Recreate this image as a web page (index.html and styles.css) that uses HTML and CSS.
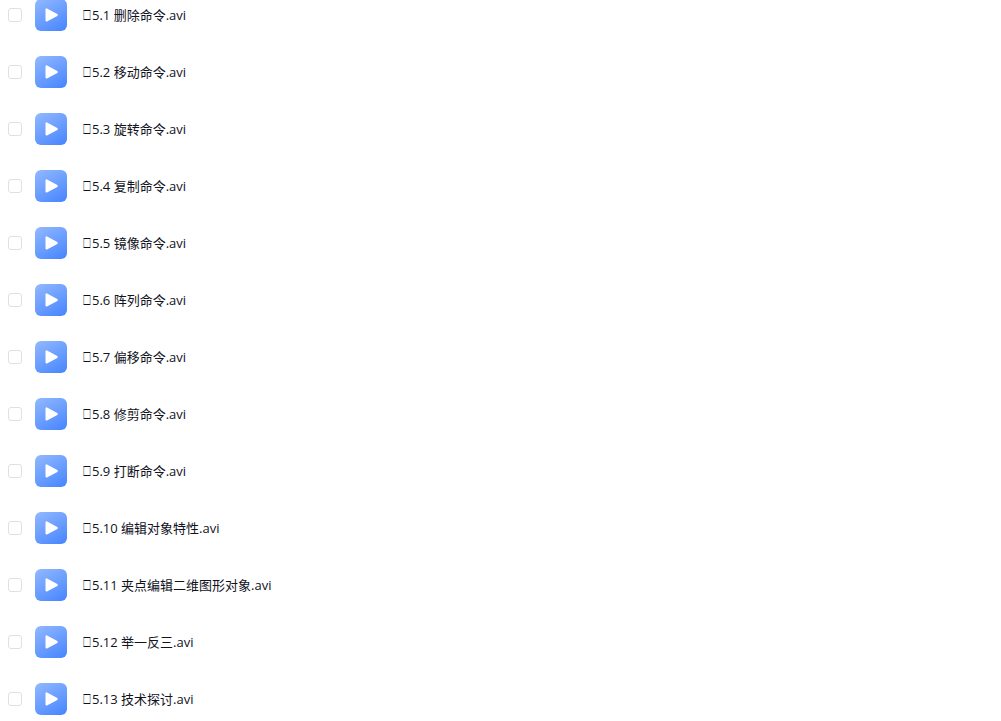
FILE: index.html
```html
<!DOCTYPE html>
<html lang="zh-CN">
<head>
	<meta charset="UTF-8">
	<title>文件列表</title>
	<link rel="stylesheet" href="styles.css">
</head>
<body>
	<!-- 播放图标，列表中重复使用 -->
	<svg class="defs" width="0" height="0" aria-hidden="true">
		<defs>
			<linearGradient id="blue" x1="0.2" y1="0" x2="0.8" y2="1">
				<stop offset="0" stop-color="#8db5ff"/>
				<stop offset="1" stop-color="#4b88ff"/>
			</linearGradient>
			<symbol id="video" viewBox="0 0 32 32">
				<rect width="32" height="32" rx="6" fill="url(#blue)"/>
				<path d="M11.5 10.4v11.2L21.8 16z" fill="#fff" stroke="#fff" stroke-width="2" stroke-linejoin="round"/>
			</symbol>
		</defs>
	</svg>
	<div class="box">
		<ul class="files">
			<li><input type="checkbox" id="f1"><svg class="icon"><use href="#video"/></svg><label for="f1"><span class="mark">⎕</span>5.1 删除命令.avi</label></li>
			<li><input type="checkbox" id="f2"><svg class="icon"><use href="#video"/></svg><label for="f2"><span class="mark">⎕</span>5.2 移动命令.avi</label></li>
			<li><input type="checkbox" id="f3"><svg class="icon"><use href="#video"/></svg><label for="f3"><span class="mark">⎕</span>5.3 旋转命令.avi</label></li>
			<li><input type="checkbox" id="f4"><svg class="icon"><use href="#video"/></svg><label for="f4"><span class="mark">⎕</span>5.4 复制命令.avi</label></li>
			<li><input type="checkbox" id="f5"><svg class="icon"><use href="#video"/></svg><label for="f5"><span class="mark">⎕</span>5.5 镜像命令.avi</label></li>
			<li><input type="checkbox" id="f6"><svg class="icon"><use href="#video"/></svg><label for="f6"><span class="mark">⎕</span>5.6 阵列命令.avi</label></li>
			<li><input type="checkbox" id="f7"><svg class="icon"><use href="#video"/></svg><label for="f7"><span class="mark">⎕</span>5.7 偏移命令.avi</label></li>
			<li><input type="checkbox" id="f8"><svg class="icon"><use href="#video"/></svg><label for="f8"><span class="mark">⎕</span>5.8 修剪命令.avi</label></li>
			<li><input type="checkbox" id="f9"><svg class="icon"><use href="#video"/></svg><label for="f9"><span class="mark">⎕</span>5.9 打断命令.avi</label></li>
			<li><input type="checkbox" id="f10"><svg class="icon"><use href="#video"/></svg><label for="f10"><span class="mark">⎕</span>5.10 编辑对象特性.avi</label></li>
			<li><input type="checkbox" id="f11"><svg class="icon"><use href="#video"/></svg><label for="f11"><span class="mark">⎕</span>5.11 夹点编辑二维图形对象.avi</label></li>
			<li><input type="checkbox" id="f12"><svg class="icon"><use href="#video"/></svg><label for="f12"><span class="mark">⎕</span>5.12 举一反三.avi</label></li>
			<li><input type="checkbox" id="f13"><svg class="icon"><use href="#video"/></svg><label for="f13"><span class="mark">⎕</span>5.13 技术探讨.avi</label></li>
		</ul>
	</div>
</body>
</html>
```
FILE: styles.css
```css
body{
	margin: 0;
	background: #fff;
	color: #10121c;
	font: 13px/20px "Open Sans", "Noto Sans CJK SC", sans-serif;
}
.defs{
	display: block;
}
.box{
	height: 100vh;
	overflow: hidden;
}
/*列表已向上滚动一点*/
.files{
	list-style: none;
	margin: -13px 0 0;
	padding: 0;
}
.files li{
	display: flex;
	align-items: center;
	padding: 12px 8px 13px;
}
.files input{
	appearance: none;
	flex: none;
	width: 14px;
	height: 14px;
	margin: 0 13px 0 0;
	border: 1px solid #e0e0e0;
	border-radius: 3px;
	background: #fff;
}
.files input:checked{
	background: #4b88ff;
	border-color: #4b88ff;
}
.icon{
	flex: none;
	width: 32px;
	height: 32px;
	margin-right: 16px;
}
.mark{
	display: inline-block;
	width: 9px;
	font-family: "DejaVu Sans", sans-serif;
	font-size: 13px;
	line-height: 1;
}
```
